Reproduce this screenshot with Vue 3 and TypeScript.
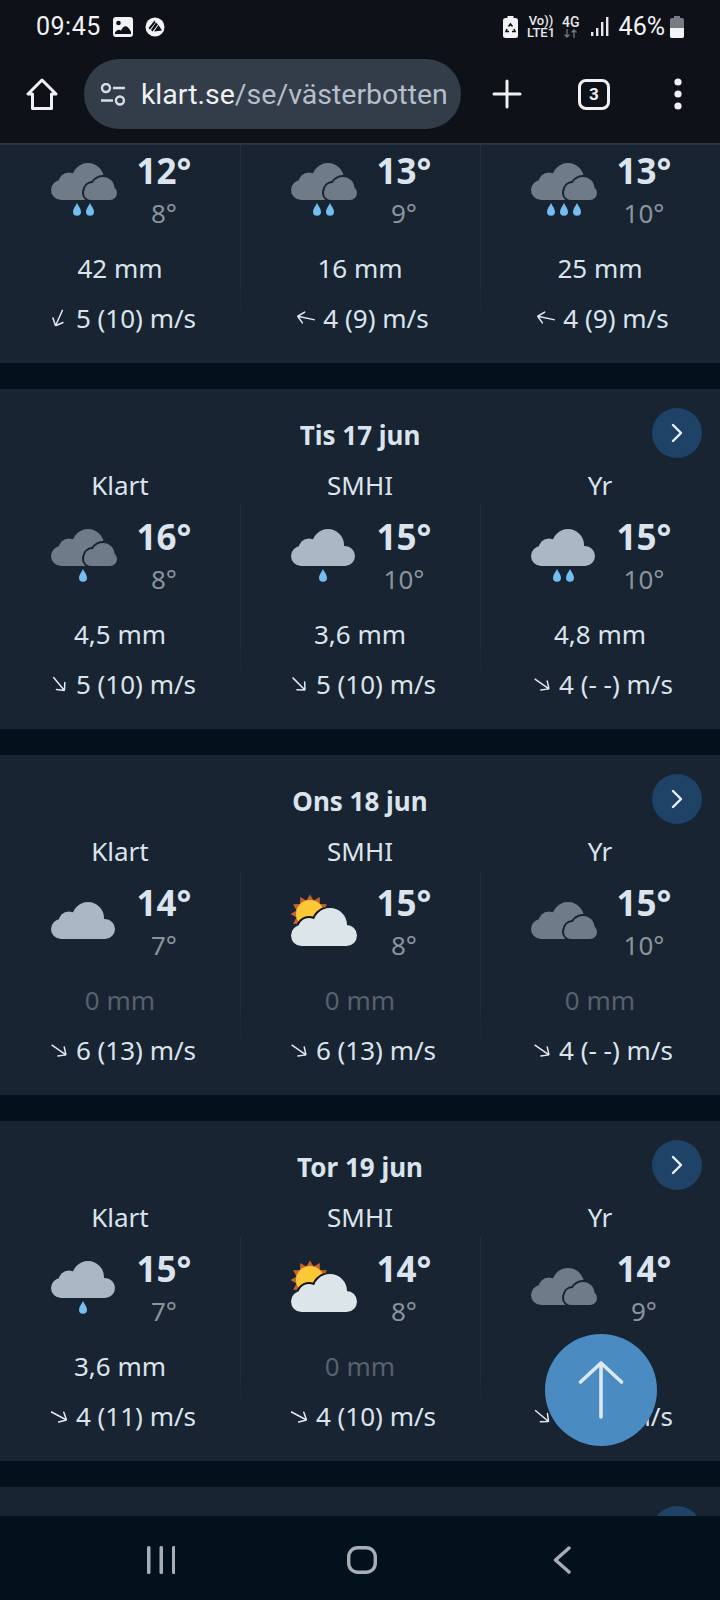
<script setup lang="ts">
type IconKind = "dark" | "light" | "sun";

interface Forecast {
  source: string;
  icon: IconKind;
  drops: number;
  high: number;
  low: number;
  rain: string;
  angle: number;
  wind: string;
}

interface Day {
  title: string;
  partial?: boolean;
  forecasts: Forecast[];
}

const f = (
  source: string,
  icon: IconKind,
  drops: number,
  high: number,
  low: number,
  rain: string,
  angle: number,
  wind: string
): Forecast => ({ source, icon, drops, high, low, rain, angle, wind });

// first and last day are cut by the browser bars, only part of them shows
const days: Day[] = [
  {
    title: "",
    partial: true,
    forecasts: [
      f("Klart", "dark", 2, 12, 8, "42 mm", 114, "5 (10) m/s"),
      f("SMHI", "dark", 2, 13, 9, "16 mm", 192, "4 (9) m/s"),
      f("Yr", "dark", 3, 13, 10, "25 mm", 192, "4 (9) m/s"),
    ],
  },
  {
    title: "Tis 17 jun",
    forecasts: [
      f("Klart", "dark", 1, 16, 8, "4,5 mm", 50, "5 (10) m/s"),
      f("SMHI", "light", 1, 15, 10, "3,6 mm", 45, "5 (10) m/s"),
      f("Yr", "light", 2, 15, 10, "4,8 mm", 35, "4 (- -) m/s"),
    ],
  },
  {
    title: "Ons 18 jun",
    forecasts: [
      f("Klart", "light", 0, 14, 7, "0 mm", 35, "6 (13) m/s"),
      f("SMHI", "sun", 0, 15, 8, "0 mm", 35, "6 (13) m/s"),
      f("Yr", "dark", 0, 15, 10, "0 mm", 35, "4 (- -) m/s"),
    ],
  },
  {
    title: "Tor 19 jun",
    forecasts: [
      f("Klart", "light", 1, 15, 7, "3,6 mm", 28, "4 (11) m/s"),
      f("SMHI", "sun", 0, 14, 8, "0 mm", 28, "4 (10) m/s"),
      f("Yr", "dark", 0, 14, 9, "0 mm", 40, "4 (- -) m/s"),
    ],
  },
  { title: "", forecasts: [] },
];

const dropPositions: Record<number, number[]> = {
  0: [],
  1: [32],
  2: [26, 39],
  3: [20, 33, 46],
};

// the cloud sits higher when there are drops under it
const cloudY = (item: Forecast): number => {
  if (item.icon === "sun") return 23;
  return item.drops > 0 ? 10 : 17;
};

const sunRays = (() => {
  const points: string[] = [];
  const count = 12;
  for (let i = 0; i < count * 2; i++) {
    const r = i % 2 === 0 ? 19.5 : 14;
    const a = (Math.PI * i) / count;
    points.push(`${(19 + r * Math.cos(a)).toFixed(1)},${(29 + r * Math.sin(a)).toFixed(1)}`);
  }
  return points.join(" ");
})();
</script>

<template>
  <div class="phone">
    <svg class="defs" width="0" height="0" aria-hidden="true">
      <defs>
        <g id="cloud-back">
          <rect x="0" y="17" width="64" height="20" rx="10" />
          <circle cx="37" cy="16" r="16" />
          <circle cx="18" cy="20" r="10.5" />
        </g>
        <g id="cloud-front">
          <rect x="33" y="23" width="33" height="14" rx="7" />
          <circle cx="52" cy="25.5" r="11.5" />
          <circle cx="41.5" cy="28" r="8" />
        </g>
        <g id="cloud-big">
          <rect x="0" y="17" width="66" height="21" rx="10.5" />
          <circle cx="39" cy="17" r="17" />
          <circle cx="18" cy="21" r="11" />
        </g>
        <clipPath id="sun-clip">
          <circle cx="19" cy="29" r="16" />
        </clipPath>
        <path id="drop" d="M0 0C1.6 3.6 4 5.800 4 8.800A4 4 0 0 1-4 8.800C-4 5.800-1.600 3.600 0 0Z" />
      </defs>
    </svg>

    <header class="top">
      <div class="status">
        <span class="clock">09:45</span>
        <svg class="st-img" width="20" height="20" viewBox="0 0 20 20">
          <rect width="20" height="20" rx="3" fill="#f2f3f4" />
          <circle cx="5.500" cy="6" r="2.300" fill="#0e1218" />
          <path d="M2 17V15.500C4 12.500 6 12 8 13.500 10 9 13 8 15 10.500 16.500 12 17.500 13.500 18 15V17Z" fill="#0e1218" />
        </svg>
        <svg class="st-app" width="20" height="20" viewBox="0 0 20 20">
          <circle cx="10" cy="10" r="9.500" fill="#f2f3f4" />
          <path d="M9.500 3.500 3.500 11 5 12.500 10.500 5.500ZM11 5.500 6 13l1.500 1.500L13 7.500ZM13.500 8 9 14.500l8-1Z" fill="#0e1218" />
        </svg>
        <span class="spacer"></span>
        <svg class="st-eco" width="15" height="22" viewBox="0 0 15 22">
          <rect x="4.500" y="0" width="6" height="2.500" fill="#f2f3f4" />
          <rect x="0" y="2" width="15" height="20" rx="2.500" fill="#f2f3f4" />
          <path d="M5.500 10.500 7.500 8 9.500 10.500M11 13 12 15.500H9M4 13 3 15.500H6" stroke="#0e1218" stroke-width="1.600" fill="none" />
        </svg>
        <span class="volte"><b>Vo))</b><b>LTE1</b></span>
        <span class="net">
          <b>4G</b>
          <svg width="16" height="9" viewBox="0 0 16 9">
            <path d="M4 0V8M1.500 5.500 4 8 6.500 5.500M11 9V1M8.500 3.500 11 1 13.500 3.500" stroke="#6e757c" stroke-width="1.300" fill="none" />
          </svg>
        </span>
        <svg class="st-signal" width="18" height="19" viewBox="0 0 18 19">
          <rect x="0" y="15" width="2.400" height="4" fill="#e6e8ea" />
          <rect x="5" y="11" width="2.400" height="8" fill="#e6e8ea" />
          <rect x="10" y="5" width="2.400" height="14" fill="#e6e8ea" />
          <rect x="15" y="0" width="2.400" height="19" fill="#e6e8ea" />
        </svg>
        <span class="pct">46%</span>
        <svg class="st-batt" width="14" height="22" viewBox="0 0 14 22">
          <rect x="4" y="0" width="6" height="3" fill="#777c82" />
          <rect x="0" y="2" width="14" height="20" rx="2" fill="#777c82" />
          <path d="M0 12H14V20a2 2 0 0 1-2 2H2a2 2 0 0 1-2-2Z" fill="#f2f3f4" />
        </svg>
      </div>

      <div class="toolbar">
        <div class="tool">
          <svg width="32" height="32" viewBox="0 0 32 32" fill="none" stroke="#f0f1f2" stroke-width="3" stroke-linejoin="round">
            <path d="M16 2 2 16H6.500V30.500H25.500V16H30Z" />
          </svg>
        </div>
        <div class="url">
          <svg width="26" height="23" viewBox="0 0 26 23" fill="none" stroke="#d8dde2" stroke-width="2.400">
            <circle cx="6" cy="5" r="4" />
            <path d="M13 5H25M1 17.500H13" />
            <circle cx="20" cy="17.500" r="4" />
          </svg>
          <span class="url-text"><span class="host">klart.se</span>/se/västerbotten</span>
        </div>
        <div class="tool">
          <svg width="30" height="30" viewBox="0 0 30 30" stroke="#f0f1f2" stroke-width="3" stroke-linecap="round">
            <path d="M15 2V28M2 15H28" />
          </svg>
        </div>
        <div class="tool"><span class="tabs">3</span></div>
        <div class="tool">
          <svg width="8" height="32" viewBox="0 0 8 32" fill="#f0f1f2">
            <circle cx="4" cy="4" r="3.600" />
            <circle cx="4" cy="16" r="3.600" />
            <circle cx="4" cy="28" r="3.600" />
          </svg>
        </div>
      </div>
    </header>

    <main class="content">
      <section v-for="(day, index) in days" :key="index" class="card" :class="{ partial: day.partial }">
        <div v-if="!day.partial" class="head">
          <h2 class="title">{{ day.title }}</h2>
          <span class="next">
            <svg width="14" height="20" viewBox="0 0 14 20" fill="none" stroke="#eef2f5" stroke-width="2.400" stroke-linecap="round" stroke-linejoin="round">
              <path d="M3 2 11 10 3 18" />
            </svg>
          </span>
        </div>

        <div v-if="day.forecasts.length" class="cols">
          <div v-for="item in day.forecasts" :key="item.source" class="col">
            <div v-if="!day.partial" class="source">{{ item.source }}</div>
            <div class="weather">
              <svg class="icon" width="66" height="70" viewBox="0 0 66 70">
                <g v-if="item.icon === 'sun'">
                  <polygon :points="sunRays" fill="#c4632c" />
                  <circle cx="19" cy="29" r="14" fill="#fbc935" />
                  <g clip-path="url(#sun-clip)">
                    <use href="#cloud-big" :y="cloudY(item)" fill="#14110f" stroke="#14110f" stroke-width="4" />
                  </g>
                  <use href="#cloud-big" :y="cloudY(item)" fill="#dbe5ea" />
                </g>
                <g v-else-if="item.icon === 'dark'">
                  <use href="#cloud-back" :y="cloudY(item)" fill="#6f7b88" />
                  <use href="#cloud-front" :y="cloudY(item)" fill="#182431" stroke="#182431" stroke-width="4" />
                  <use href="#cloud-front" :y="cloudY(item)" fill="#6f7b88" />
                </g>
                <use v-else href="#cloud-back" :y="cloudY(item)" fill="#aab8c6" />
                <use v-for="x in dropPositions[item.drops]" :key="x" href="#drop" :x="x" y="50" fill="#74bdf2" />
              </svg>
              <div class="temps">
                <div class="high">{{ item.high }}°</div>
                <div class="low">{{ item.low }}°</div>
              </div>
            </div>
            <div class="rain" :class="{ dry: item.rain === '0 mm' }">{{ item.rain }}</div>
            <div class="wind">
              <svg width="18" height="18" viewBox="0 0 18 18" fill="none" stroke="#e3e9ee" stroke-width="1.500" stroke-linecap="round" stroke-linejoin="round" :style="{ transform: `rotate(${item.angle}deg)` }">
                <path d="M0 9H17.500M11.500 3.500 17.500 9 11.500 14.500" />
              </svg>
              <span>{{ item.wind }}</span>
            </div>
          </div>
        </div>
      </section>
    </main>

    <button class="to-top" type="button" aria-label="Till toppen">
      <svg width="46" height="60" viewBox="0 0 46 60" fill="none" stroke="#dce9f3" stroke-width="3.600" stroke-linecap="round" stroke-linejoin="round">
        <path d="M23 3V57M2.500 22 23 3 43.500 22" />
      </svg>
    </button>

    <nav class="nav">
      <svg width="28" height="28" viewBox="0 0 28 28" fill="#a7aeb5">
        <rect x="0" y="0" width="3.500" height="28" rx="1.500" />
        <rect x="12.500" y="0" width="3.500" height="28" rx="1.500" />
        <rect x="25" y="0" width="3.500" height="28" rx="1.500" />
      </svg>
      <svg width="30" height="28" viewBox="0 0 30 28" fill="none" stroke="#a7aeb5" stroke-width="3.400">
        <rect x="1.700" y="1.700" width="26.600" height="24.600" rx="9" />
      </svg>
      <svg width="18" height="28" viewBox="0 0 18 28" fill="none" stroke="#a7aeb5" stroke-width="3.400" stroke-linecap="round" stroke-linejoin="round">
        <path d="M16 2 2.500 14 16 26" />
      </svg>
    </nav>
  </div>
</template>

<style>
html,
body {
  margin: 0;
  background: #03111c;
}
</style>

<style scoped>
.phone {
  position: relative;
  display: flex;
  flex-direction: column;
  width: 720px;
  height: 1600px;
  overflow: hidden;
  background: #03111c;
  font-family: "Noto Sans", sans-serif;
  color: #dbe4ec;
}

.defs {
  position: absolute;
}

.top {
  flex: none;
  height: 143px;
  background: #0e1218;
  border-bottom: 2px solid #2d343c;
  font-family: Roboto, sans-serif;
}

.status {
  display: flex;
  align-items: center;
  height: 53px;
  padding: 0 36px;
  color: #f2f3f4;
}

.clock {
  font-size: 25px;
  letter-spacing: 0.5px;
  margin-right: 12px;
}

.st-img {
  margin-right: 12px;
}

.spacer {
  flex: 1;
}

.st-eco {
  margin-right: 9px;
}

.volte {
  display: flex;
  flex-direction: column;
  align-items: center;
  margin-right: 7px;
}

.volte b {
  font-weight: 500;
  font-size: 13px;
  line-height: 12px;
  color: #e6e8ea;
}

.net {
  display: flex;
  flex-direction: column;
  align-items: center;
  margin-right: 11px;
  line-height: 10px;
}

.net b {
  font-weight: 500;
  font-size: 14px;
  line-height: 13px;
  color: #e6e8ea;
}

.pct {
  font-size: 25px;
  margin: 0 5px 0 10px;
}

.toolbar {
  display: grid;
  grid-template-columns: 84px 377px 92px 82px 85px;
  align-items: center;
  height: 82px;
}

.tool {
  display: flex;
  align-items: center;
  justify-content: center;
}

.url {
  display: flex;
  align-items: center;
  height: 70px;
  border-radius: 35px;
  padding: 0 14px 0 16px;
  background: #333c49;
  overflow: hidden;
  box-sizing: border-box;
}

.url-text {
  margin-left: 15px;
  font-size: 28.5px;
  color: #b5bec9;
  white-space: nowrap;
  overflow: hidden;
}

.host {
  color: #eef1f4;
}

.tabs {
  display: flex;
  align-items: center;
  justify-content: center;
  width: 32px;
  height: 31px;
  box-sizing: border-box;
  border: 3px solid #f0f1f2;
  border-radius: 8px;
  font-size: 17px;
  font-weight: 700;
  color: #f0f1f2;
}

.content {
  flex: 1;
  min-height: 0;
  overflow: hidden;
  display: flex;
  flex-direction: column;
  gap: 26px;
}

.card {
  flex: none;
  height: 340px;
  background: #182431;
}

.card.partial {
  height: 218px;
}

.head {
  position: relative;
  height: 40px;
  padding-top: 26px;
  text-align: center;
}

.title {
  margin: 0;
  font-size: 26px;
  font-weight: 700;
  line-height: 40px;
}

.next {
  position: absolute;
  top: 19px;
  right: 18px;
  display: flex;
  align-items: center;
  justify-content: center;
  width: 50px;
  height: 50px;
  border-radius: 50%;
  background: #1f4367;
}

.cols {
  display: grid;
  grid-template-columns: repeat(3, 1fr);
  margin-top: 10px;
}

.partial .cols {
  margin-top: -6px;
}

.col {
  position: relative;
}

.col + .col::before {
  content: "";
  position: absolute;
  left: 0;
  top: 40px;
  height: 178px;
  width: 1px;
  background: linear-gradient(rgba(255, 255, 255, 0.05) 70%, rgba(255, 255, 255, 0));
}

.partial .col + .col::before {
  top: 6px;
}

.source {
  height: 40px;
  font-size: 26px;
  line-height: 40px;
  text-align: center;
}

.weather {
  display: flex;
  height: 109px;
  padding-left: 51px;
}

.icon {
  flex: none;
  overflow: visible;
  margin-top: 14px;
}

.temps {
  width: 94px;
  padding-top: 10px;
  text-align: center;
}

.high {
  font-size: 35px;
  font-weight: 700;
  line-height: 44px;
}

.low {
  margin-top: 2px;
  font-size: 26px;
  line-height: 36px;
  color: #8a949e;
}

.rain {
  font-size: 26px;
  line-height: 40px;
  text-align: center;
}

.rain.dry {
  color: #56616d;
}

.wind {
  display: flex;
  align-items: center;
  justify-content: center;
  gap: 8px;
  margin-top: 10px;
  padding-left: 6px;
  font-size: 26px;
  line-height: 40px;
}

.to-top {
  position: absolute;
  left: 545px;
  top: 1334px;
  display: flex;
  align-items: center;
  justify-content: center;
  width: 112px;
  height: 112px;
  padding: 0;
  border: 0;
  border-radius: 50%;
  background: #4a8bc2;
}

.nav {
  position: relative;
  flex: none;
  height: 84px;
  box-sizing: border-box;
  padding-top: 4px;
  display: grid;
  grid-template-columns: 322px 1fr 1fr;
  align-items: center;
  background: #03111c;
}

.nav svg:nth-child(1) {
  margin-left: 147px;
}

.nav svg:nth-child(2) {
  margin-left: 25px;
}

.nav svg:nth-child(3) {
  margin-left: 32px;
}
</style>
